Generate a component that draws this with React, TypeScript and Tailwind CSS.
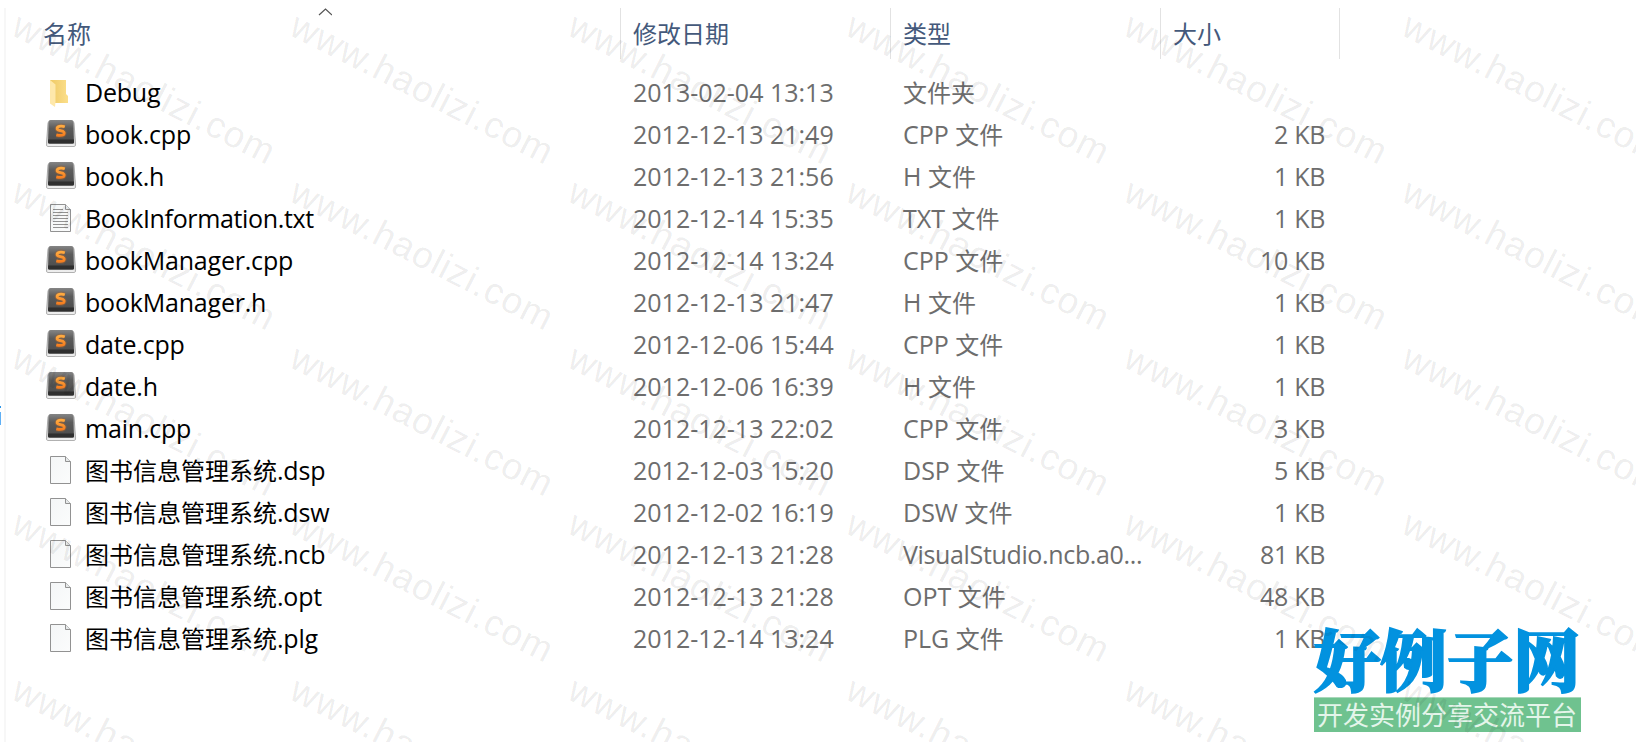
import React from 'react';

type Kind = 'folder' | 'code' | 'text' | 'blank';
interface Entry { name: string; date: string; type: string; size: string; kind: Kind }

const entries: Entry[] = [
  { name: 'Debug', date: '2013-02-04 13:13', type: '文件夹', size: '', kind: 'folder' },
  { name: 'book.cpp', date: '2012-12-13 21:49', type: 'CPP 文件', size: '2 KB', kind: 'code' },
  { name: 'book.h', date: '2012-12-13 21:56', type: 'H 文件', size: '1 KB', kind: 'code' },
  { name: 'BookInformation.txt', date: '2012-12-14 15:35', type: 'TXT 文件', size: '1 KB', kind: 'text' },
  { name: 'bookManager.cpp', date: '2012-12-14 13:24', type: 'CPP 文件', size: '10 KB', kind: 'code' },
  { name: 'bookManager.h', date: '2012-12-13 21:47', type: 'H 文件', size: '1 KB', kind: 'code' },
  { name: 'date.cpp', date: '2012-12-06 15:44', type: 'CPP 文件', size: '1 KB', kind: 'code' },
  { name: 'date.h', date: '2012-12-06 16:39', type: 'H 文件', size: '1 KB', kind: 'code' },
  { name: 'main.cpp', date: '2012-12-13 22:02', type: 'CPP 文件', size: '3 KB', kind: 'code' },
  { name: '图书信息管理系统.dsp', date: '2012-12-03 15:20', type: 'DSP 文件', size: '5 KB', kind: 'blank' },
  { name: '图书信息管理系统.dsw', date: '2012-12-02 16:19', type: 'DSW 文件', size: '1 KB', kind: 'blank' },
  { name: '图书信息管理系统.ncb', date: '2012-12-13 21:28', type: 'VisualStudio.ncb.a0...', size: '81 KB', kind: 'blank' },
  { name: '图书信息管理系统.opt', date: '2012-12-13 21:28', type: 'OPT 文件', size: '48 KB', kind: 'blank' },
  { name: '图书信息管理系统.plg', date: '2012-12-14 13:24', type: 'PLG 文件', size: '1 KB', kind: 'blank' },
];

/* Latin runs are set one pixel larger than the Chinese ones; long runs are set tighter. */
function Label({ text }: { text: string }) {
  const runs = text.match(/[\u4e00-\u9fff]+|[^\u4e00-\u9fff]+/g) ?? [];
  return (
    <>
      {runs.map((run, i) =>
        /[\u4e00-\u9fff]/.test(run) ? (
          <span key={i} className="text-[24px] tracking-normal font-['Noto_Sans_CJK_SC',sans-serif]">{run}</span>
        ) : (
          <span key={i} className={run.length > 18 ? 'text-[25px] tracking-[-0.35px]' : 'text-[25px]'}>{run}</span>
        ),
      )}
    </>
  );
}

function FileIcon({ kind }: { kind: Kind }) {
  if (kind === 'folder')
    return (
      <svg width="32" height="32" viewBox="0 0 32 32">
        <defs>
          <linearGradient id="fold" x1="0" x2="1"><stop offset="0" stopColor="#efc965" /><stop offset="1" stopColor="#fbdf8b" /></linearGradient>
        </defs>
        <path d="M4 2H20V16L22 18V25H8Z" fill="url(#fold)" />
        <path d="M4 2L9.5 6.500V24L9 29L4 25.500Z" fill="#fee8ab" />
      </svg>
    );
  if (kind === 'code')
    return (
      <svg width="32" height="32" viewBox="0 0 32 32">
        <defs>
          <linearGradient id="key" x1="0" x2="0" y1="0" y2="1"><stop offset="0" stopColor="#858585" /><stop offset=".35" stopColor="#5b5b5b" /><stop offset="1" stopColor="#4a4a4a" /></linearGradient>
          <linearGradient id="side" x1="0" x2="0" y1="0" y2="1"><stop offset="0" stopColor="#999" /><stop offset="1" stopColor="#e4e4e4" /></linearGradient>
          <linearGradient id="glow" x1="0" x2="0" y1="0" y2="1"><stop offset="0" stopColor="#ffab40" /><stop offset="1" stopColor="#f57e20" /></linearGradient>
        </defs>
        <path d="M4.500 .5H25.500Q27.500 .5 28 3L29.600 24Q29.800 26.500 28 26.500H2Q.2 26.500 .4 24L2 3Q2.500 .5 4.500 .5Z" fill="url(#side)" stroke="#a0a0a0" strokeWidth=".8" />
        <path d="M1.500 24.500H28.500V25.500H1.500Z" fill="#fafafa" />
        <path d="M4.800 0H25.200Q27 0 27.200 2L28 22Q28 23.500 26.500 23.500H3.500Q2 23.500 2 22L2.800 2Q3 0 4.800 0Z" fill="url(#key)" />
        <path d="M2.200 19.500H27.900L28 22Q28 23.500 26.500 23.500H3.500Q2 23.500 2 22Z" fill="#2f2f2f" />
        <path d="M18.800 6.800Q14.500 5.300 11.800 7Q10 9.200 12.500 10.200L17 11.400Q19.200 12.800 17.500 14.700Q14.900 16 10.300 14.800" fill="none" stroke="#a9652e" strokeOpacity=".4" strokeWidth="5" />
        <path d="M18.800 6.800Q14.500 5.300 11.800 7Q10 9.200 12.500 10.200L17 11.400Q19.200 12.800 17.500 14.700Q14.900 16 10.300 14.800" fill="none" stroke="url(#glow)" strokeWidth="2.800" />
      </svg>
    );
  return (
    <svg width="32" height="32" viewBox="0 0 32 32">
      <defs>
        <linearGradient id="sheet" x1="0" y1="0" x2="1" y2="1"><stop offset="0" stopColor="#f4f6f7" /><stop offset="1" stopColor="#fbfcfc" /></linearGradient>
      </defs>
      <path d="M4.500 .5H19.500L24.500 5.500V27.500H4.500Z" fill="url(#sheet)" stroke="#929292" />
      <path d="M19.500 .5V5.500H24.500" fill="#e6e9ea" stroke="#929292" />
      {kind === 'text' && (
        <path d="M7 5.500H17M7 8.500H22M7 11.500H22M7 14.500H22M7 17.500H22M7 20.500H22M7 23.500H22" stroke="#939393" />
      )}
    </svg>
  );
}

const columns = [
  { title: '修改日期', cls: 'w-[270px]' },
  { title: '类型', cls: 'w-[270px]' },
  { title: '大小', cls: 'w-[180px] border-r' },
];

function Watermark() {
  return (
    <div className="pointer-events-none absolute inset-0 z-10 overflow-hidden">
      <div className="grid grid-cols-[repeat(6,278px)] auto-rows-[166px] w-[1668px]">
        {Array.from({ length: 30 }, (_, i) => (
          <div key={i} className="pl-[10px]">
            <div className="w-max origin-[0_33px] rotate-[27deg] whitespace-nowrap font-['Liberation_Sans',sans-serif] text-[37px] leading-[44px] tracking-[1.1px] text-black/[0.08]">
              www.haolizi.com
            </div>
          </div>
        ))}
      </div>
    </div>
  );
}

export default function App() {
  return (
    <div className="relative h-[742px] w-[1636px] overflow-hidden bg-white font-['Open_Sans','Noto_Sans_CJK_SC',sans-serif]">
      <div className="flex h-full pt-[8px]">
        <div className="w-[4px] shrink-0 overflow-hidden pt-[398px]">
          <div className="h-[2px] w-px bg-[#2b95e8]" />
          <div className="mt-[4px] h-[13px] w-px bg-[#60b0f5]" />
        </div>
        <div className="flex flex-col border-l-2 border-[#f7f7f7]">
          <header className="flex h-[51px] text-[24px] text-[#44597b]">
            <div className="flex w-[614px] pl-[37px]">
              <span className="w-[275px] leading-[50px] font-['Noto_Sans_CJK_SC',sans-serif]">名称</span>
              <svg width="14" height="8" viewBox="0 0 14 8"><path d="M1 7L7.500 1L14 7" fill="none" stroke="#555" strokeWidth="1.200" /></svg>
            </div>
            {columns.map((c) => (
              <div key={c.title} className={`${c.cls} border-l border-[#e2e2e2] pl-[12px] leading-[50px] font-['Noto_Sans_CJK_SC',sans-serif]`}>
                {c.title}
              </div>
            ))}
          </header>
          <main className="pt-[14px] text-[#6d6d6d]">
            {entries.map((e) => (
              <div key={e.name} className="flex h-[42px] items-start whitespace-nowrap leading-[38px]">
                <div className="flex w-[627px] pl-[40px] text-black">
                  <div className="w-[39px] shrink-0 pt-[5px]"><FileIcon kind={e.kind} /></div>
                  <span className="h-[42px] tracking-[-0.2px]"><Label text={e.name} /></span>
                </div>
                <div className="h-[42px] w-[270px]"><Label text={e.date} /></div>
                <div className="h-[42px] w-[270px]"><Label text={e.type} /></div>
                <div className="h-[42px] w-[152px] text-right tracking-[-0.3px]"><Label text={e.size} /></div>
              </div>
            ))}
          </main>
        </div>
      </div>
      <div className="absolute left-[1314px] top-[626px] w-[267px]">
        <div className="h-[71px] whitespace-nowrap text-[66.500px] leading-[63px] font-black text-[#0292df] [-webkit-text-stroke:2px_#0292df] font-['Noto_Serif_CJK_SC','Noto_Sans_CJK_SC',serif]">好例子网</div>
        <div className="h-[35px] border-t border-[#a9d8ba] bg-[#6fc28f] pl-[3px] text-[26px] leading-[31px] whitespace-nowrap text-[#e4f5ea] font-['Noto_Sans_CJK_SC',sans-serif]">开发实例分享交流平台</div>
      </div>
      <Watermark />
    </div>
  );
}
